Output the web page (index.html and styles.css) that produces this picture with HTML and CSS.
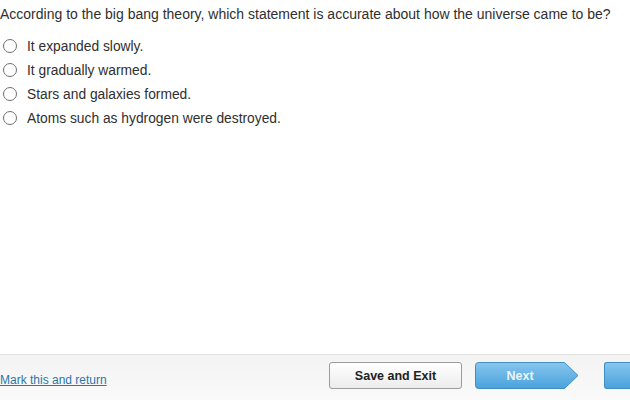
FILE: index.html
```html
<!DOCTYPE html>
<html>
<head>
<meta charset="utf-8">
<link rel="stylesheet" href="styles.css">
</head>
<body>
<div class="page">
  <main class="content">
    <p class="question">According to the big bang theory, which statement is accurate about how the universe came to be?</p>
    <ul class="options">
      <li class="option"><span class="radio"></span><span class="label">It expanded slowly.</span></li>
      <li class="option"><span class="radio"></span><span class="label">It gradually warmed.</span></li>
      <li class="option"><span class="radio"></span><span class="label">Stars and galaxies formed.</span></li>
      <li class="option"><span class="radio"></span><span class="label">Atoms such as hydrogen were destroyed.</span></li>
    </ul>
  </main>
  <footer class="footer">
    <div class="footer-left"><a class="mark" href="#">Mark this and return</a></div>
    <div class="buttons">
      <button class="btn save">Save and Exit</button>
      <button class="btn next">
        <svg class="next-shape" width="104" height="27" viewBox="0 0 104 27">
          <defs>
            <linearGradient id="g" x1="0" y1="0" x2="0" y2="1">
              <stop offset="0" stop-color="#86c6ee"/>
              <stop offset="1" stop-color="#4aa2dc"/>
            </linearGradient>
          </defs>
          <path d="M3.5 0.5 H89.5 L103 13.5 L89.5 26.5 H3.5 Q0.5 26.5 0.5 23.5 V3.5 Q0.5 0.5 3.5 0.5 Z" fill="url(#g)" stroke="#3f8fc4" stroke-width="1"/>
        </svg>
        <span class="next-text">Next</span>
      </button>
      <button class="btn blue"></button>
    </div>
  </footer>
</div>
</body>
</html>
```
FILE: styles.css
```css
html, body {
  margin: 0;
  padding: 0;
  background: #fff;
  overflow: hidden;
}
body {
  font-family: "Liberation Sans", Arial, Helvetica, sans-serif;
  color: #333;
}
.page {
  width: 630px;
  height: 400px;
  display: flex;
  flex-direction: column;
}
.content {
  flex: 1;
}
.question {
  margin: 0;
  padding-top: 5px;
  font-size: 14px;
  line-height: 18px;
  color: #2f2f2f;
  white-space: nowrap;
}
.options {
  list-style: none;
  margin: 11px 0 0 0;
  padding: 0;
}
.option {
  display: flex;
  align-items: center;
  height: 24px;
}
.radio {
  width: 12px;
  height: 12px;
  border: 1.6px solid #707070;
  border-radius: 50%;
  margin-left: 3px;
  margin-right: 10px;
  box-sizing: content-box;
  background: #fff;
}
.label {
  font-size: 13.8px;
  color: #2f2f2f;
}
.footer {
  height: 46px;
  border-top: 1px solid #e2e2e2;
  background: linear-gradient(#f3f3f3, #fafafa);
  display: flex;
  align-items: flex-start;
  padding-top: 7px;
  box-sizing: border-box;
}
.footer-left {
  width: 329px;
  flex: none;
  padding-top: 8px;
}
.mark {
  font-size: 12px;
  color: #2a78a8;
  text-decoration: underline;
}
.buttons {
  display: flex;
  flex: none;
}
.btn {
  font-family: "Liberation Sans", Arial, Helvetica, sans-serif;
  font-weight: bold;
  font-size: 12.5px;
  height: 27px;
  padding: 0;
  cursor: pointer;
}
.save {
  width: 133px;
  border: 1px solid #9c9c9c;
  border-radius: 3px;
  background: linear-gradient(#ffffff, #ececec);
  color: #222;
}
.next {
  margin-left: 13px;
  width: 104px;
  border: none;
  background: none;
  position: relative;
  color: #eaf5fc;
}
.next-shape {
  position: absolute;
  left: 0;
  top: 0;
}
.next-text {
  position: relative;
  display: block;
  width: 90px;
  text-align: center;
}
.blue {
  margin-left: 25px;
  width: 26px;
  border: 1px solid #3f8fc4;
  border-right: none;
  border-radius: 3px 0 0 3px;
  background: linear-gradient(#86c6ee, #4aa2dc);
}
```
